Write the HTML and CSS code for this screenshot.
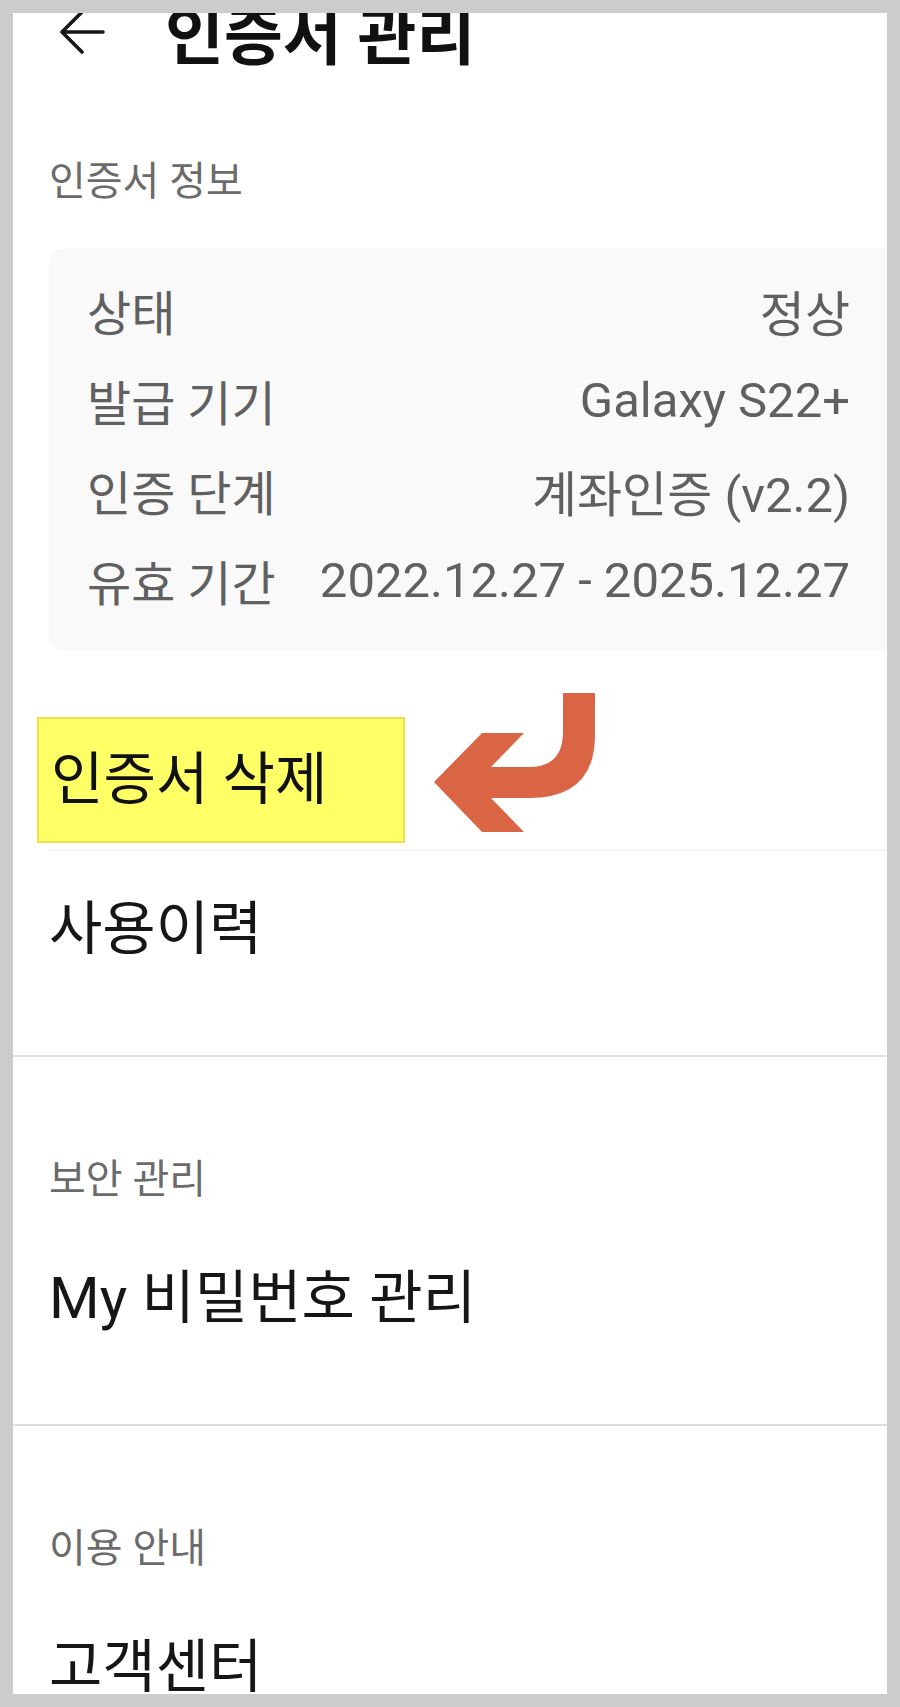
FILE: index.html
```html
<!DOCTYPE html>
<html lang="ko">
<head>
  <meta charset="UTF-8">
  <title>인증서 관리</title>
  <meta name="viewport" content="width=device-width, initial-scale=1.0">
  <link rel="stylesheet" href="styles.css">
</head>
<body>
  <div class="screen">
    <header class="topbar">
      <svg class="back" viewBox="0 0 46 46" aria-label="뒤로">
        <path d="M44 23H4M23 3L3 23L23 43" />
      </svg>
      <h1>인증서 관리</h1>
    </header>

    <section class="group first">
      <h2 class="group-title">인증서 정보</h2>
      <dl class="info-card">
        <div class="info-row"><dt>상태</dt><dd>정상</dd></div>
        <div class="info-row"><dt>발급 기기</dt><dd>Galaxy S22+</dd></div>
        <div class="info-row"><dt>인증 단계</dt><dd>계좌인증 (v2.2)</dd></div>
        <div class="info-row"><dt>유효 기간</dt><dd>2022.12.27 - 2025.12.27</dd></div>
      </dl>

      <div class="pick-row">
        <span class="mark">인증서 삭제</span>
        <svg class="pointer" viewBox="0 0 170 155">
          <path d="M5 92L53 43H95L62 77H100Q134 77 134 42V3H166V45Q166 108 100 108H62L95 142H53Z" />
        </svg>
      </div>
      <div class="menu-item history">사용이력</div>
    </section>

    <section class="group">
      <h2 class="group-title">보안 관리</h2>
      <div class="menu-item">My 비밀번호 관리</div>
    </section>

    <section class="group last">
      <h2 class="group-title">이용 안내</h2>
      <div class="menu-item">고객센터</div>
    </section>
  </div>
</body>
</html>
```

FILE: styles.css
```css
body {
  margin: 0;
  padding: 13px;
  background: #cccccc;
  font-family: Roboto, "Noto Sans CJK KR", sans-serif;
}

.screen {
  background: #fff;
  height: 1681px;
  overflow: hidden;
}

.topbar {
  display: flex;
  align-items: center;
  height: 50px;
}

.back {
  width: 46px;
  height: 46px;
  margin-left: 46px;
  margin-top: -4px;
  align-self: flex-start;
  fill: none;
  stroke: #161616;
  stroke-width: 3.6;
  stroke-linecap: round;
  stroke-linejoin: round;
}

.topbar h1 {
  margin: 0 0 0 60px;
  font-size: 64px;
  line-height: 44px;
  font-weight: 700;
  color: #111;
}

.group {
  padding-top: 99px;
  border-bottom: 2px solid #dedede;
}

.group.first {
  padding-top: 95px;
}

.group.last {
  border-bottom: none;
}

.group-title {
  margin: 0 0 0 36px;
  font-size: 40px;
  line-height: 48px;
  font-weight: 400;
  color: #6b6b6b;
}

.info-card {
  margin: 42px 0 0 36px;
  padding: 17px 37px 26px 38px;
  background: #f9f9f9;
  border-radius: 14px 0 0 14px;
}

.info-row {
  display: flex;
  justify-content: space-between;
  height: 90px;
  align-items: center;
  font-size: 48px;
  color: #606060;
}

.info-row dt,
.info-row dd {
  margin: 0;
}

.info-row dd {
  font-size: 49px;
}

.pick-row {
  display: flex;
  align-items: flex-start;
  margin: 66px 0 0 24px;
}

.mark {
  display: inline-block;
  height: 122px;
  line-height: 122px;
  padding: 0 76px 0 12px;
  font-size: 57px;
  color: #111;
  background: #ffff66;
  border: 2px solid #f3dc4a;
}

.pointer {
  width: 170px;
  height: 155px;
  margin: -27px 0 0 24px;
  fill: #d96545;
}

.menu-item {
  margin-left: 36px;
  padding: 62px 0 94px;
  font-size: 58px;
  line-height: 64px;
  color: #161616;
}

.menu-item.history {
  margin-top: 4px;
  padding: 46px 0 94px;
  border-top: 2px solid #f4f4f4;
}
```
